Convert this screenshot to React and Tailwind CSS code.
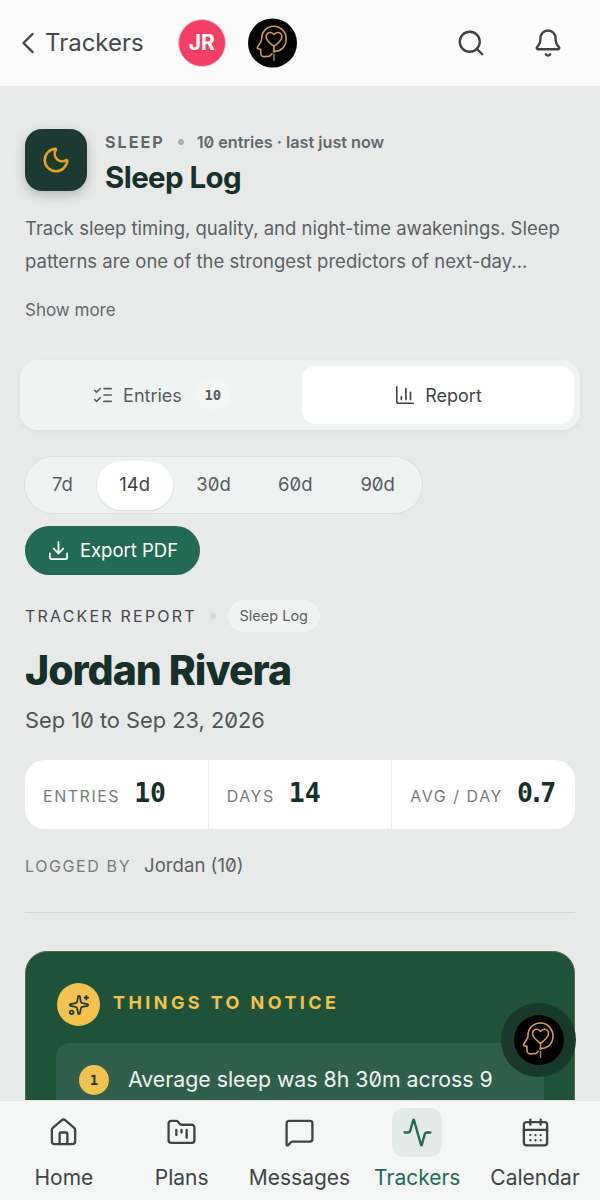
import React from 'react'
import {
  ChevronLeft,
  Search,
  Bell,
  Moon,
  ListChecks,
  ChartColumn,
  Download,
  Sparkles,
  House,
  FolderKanban,
  MessageSquare,
  Activity,
  CalendarDays,
} from 'lucide-react'

const sans = { fontFamily: 'Inter, "Noto Sans", sans-serif' }
const mono = { fontFamily: '"DejaVu Sans Mono", monospace' }

function BrainLogo({ className = '' }) {
  return (
    <svg viewBox="0 0 50 50" className={className}>
      <circle cx="25" cy="25" r="25" fill="#000" />
      <g fill="none" stroke="#d3955c" strokeWidth="1.6" strokeLinecap="round" strokeLinejoin="round">
        <path d="M26 33.5c7 .6 13-4.6 13-12.2C39 13.8 33.500 8 26.500 8 19 8 14 13.500 14 20.500c0 1.500-.6 2.700-1.400 4l-3 5c-.4.8 0 1.400 1 1.500l2.400.3v4.200c0 2.300 1.800 3.600 4 3.400l5-.5 2.500-2.300" />
        <path d="M26.500 28.500c-4-3-8-6-8-10 0-2.500 2-4.300 4.300-4.300 1.600 0 2.800.8 3.700 2.200.9-1.400 2.100-2.200 3.700-2.200 2.300 0 4.300 1.800 4.300 4.300 0 4-4 7-8 10z" />
        <path d="M26.500 28.500v6" />
      </g>
      <path d="M26.500 36v7" stroke="#8a9a86" strokeWidth="1.4" fill="none" />
    </svg>
  )
}

function NavItem({ icon: Icon, label, active }) {
  return (
    <div className="flex flex-1 flex-col items-center">
      <div className={`flex h-[49px] w-[50px] items-center justify-center rounded-xl ${active ? 'bg-[#e3eae8] text-[#236a54]' : 'text-[#3f4445]'}`}>
        <Icon size={31} strokeWidth={1.8} />
      </div>
      <span className={`mt-[7px] whitespace-nowrap text-[21px] leading-[28px] ${active ? 'text-[#236a54]' : 'text-[#3f4445]'}`}>
        {label}
      </span>
    </div>
  )
}

function Stat({ label, value, border, tight }) {
  return (
    <div className={`flex flex-1 items-center gap-[14px] pl-[18px] ${border ? 'border-l border-[#eceeee]' : ''}`}>
      <span className="mt-[3px] text-[16px] tracking-[0.095em] text-[#767b7c]">{label}</span>
      <span className={`mb-[3px] text-[26.500px] font-bold text-[#16302a] ${tight ? 'tracking-[-0.16em]' : ''}`} style={mono}>
        {value}
      </span>
    </div>
  )
}

export default function App() {
  return (
    <div className="relative h-[1200px] w-[600px] overflow-hidden bg-[#e8eaea] slashed-zero" style={sans}>
      <header className="flex h-[86px] items-center bg-[#fbfbfb] pl-[10px] pr-[37px]">
        <ChevronLeft size={36} strokeWidth={1.600} className="text-[#3f4445]" />
        <span className="-ml-px text-[24px] text-[#454a4b]">Trackers</span>
        <div className="ml-[34px] flex h-[48px] w-[48px] items-center justify-center rounded-full border border-[#f3c5d0] bg-[#f33f65] text-[21px] font-bold text-white">
          JR
        </div>
        <BrainLogo className="ml-[22px] h-[50px] w-[49px]" />
        <Search size={30} strokeWidth={1.900} className="ml-auto text-[#3f4445]" />
        <Bell size={30} strokeWidth={1.900} className="ml-[47px] text-[#3f4445]" />
      </header>

      <main className="px-[25px]">
        <section className="flex gap-[18px] pt-[43px]">
          <div className="flex h-[62px] w-[62px] shrink-0 items-center justify-center rounded-[17px] bg-[#1b3a31] shadow-[0_4px_12px_rgba(0,0,0,0.22)]">
            <Moon size={30} strokeWidth={2} className="text-[#e8a317]" />
          </div>
          <div className="mt-[1px]">
            <div className="flex items-center text-[16.200px] font-semibold text-[#63686a]">
              <span className="font-bold tracking-[0.12em]">SLEEP</span>
              <span className="mx-[13px] h-[6px] w-[6px] rounded-full bg-[#a9aeae]" />
              <span>10 entries · last just now</span>
            </div>
            <h1 className="mt-[3px] text-[29.500px] font-bold leading-[40px] tracking-[-0.02em] text-[#16302a]">Sleep Log</h1>
          </div>
        </section>

        <p className="mt-[15px] text-[18.500px] leading-[33px] text-[#5b6062]">
          Track sleep timing, quality, and night-time awakenings. Sleep patterns are one of the strongest predictors of next-day...
        </p>
        <p className="mt-[19px] text-[17px] leading-[26px] text-[#63686a]">Show more</p>

        <div className="-mx-[5px] mt-[37px] flex h-[70px] gap-[6px] rounded-[18px] bg-[#eff3f2] p-[6px] shadow-[0_2px_6px_rgba(0,0,0,0.05)]">
          <div className="flex flex-1 items-center justify-center text-[#575c5e]">
            <ListChecks size={22} strokeWidth={1.800} />
            <span className="ml-[9px] text-[18px]">Entries</span>
            <span className="ml-[14px] flex h-[30px] w-[34px] items-center justify-center rounded-full bg-[#f3f6f5] text-[14px] font-bold" style={mono}>
              10
            </span>
          </div>
          <div className="flex w-[272px] items-center justify-center rounded-[14px] bg-white text-[#3f4445]">
            <ChartColumn size={22} strokeWidth={1.800} />
            <span className="ml-[9px] text-[18px]">Report</span>
          </div>
        </div>

        <div className="-ml-px mt-[26px] flex h-[58px] w-[399px] items-center rounded-full border border-[#dcdfdf] bg-[#eef2f1] px-[3px] text-[18.500px] text-[#575c5e]">
          <span className="w-[69px] text-center">7d</span>
          <span className="flex h-[49px] w-[76px] items-center justify-center rounded-full bg-white text-[#3f4445] shadow-[0_1px_2px_rgba(0,0,0,0.12)]">14d</span>
          <span className="w-[82px] text-center">30d</span>
          <span className="w-[82px] text-center">60d</span>
          <span className="w-[83px] text-center">90d</span>
        </div>

        <div className="mt-[12px] flex h-[49px] w-[175px] items-center justify-center rounded-full bg-[#236a54] text-white">
          <Download size={23} strokeWidth={1.900} />
          <span className="ml-[10px] text-[18.500px]">Export PDF</span>
        </div>

        <div className="mt-[25px] flex items-center">
          <span className="text-[16px] tracking-[0.1375em] text-[#45494a]">TRACKER REPORT</span>
          <span className="ml-[13px] h-[6px] w-[6px] rounded-full bg-[#cfdcdf]" />
          <span className="ml-[12px] flex h-[32px] w-[92px] items-center justify-center rounded-full bg-[#f0f3f2] text-[14.500px] text-[#5b6062]">
            Sleep Log
          </span>
        </div>

        <h2 className="mt-[11px] text-[41px] font-extrabold leading-[54px] tracking-[-0.025em] text-[#16302a]">Jordan Rivera</h2>
        <p className="mt-[8px] text-[21.800px] leading-[30px] text-[#4f5455]">Sep 10 to Sep 23, 2026</p>

        <div className="mt-[25px] flex h-[69px] rounded-[20px] bg-white">
          <Stat label="ENTRIES" value="10" />
          <Stat label="DAYS" value="14" border />
          <Stat label="AVG / DAY" value="0.7" border tight />
        </div>

        <div className="mt-[23px] flex items-center">
          <span className="text-[16px] tracking-[0.1em] text-[#767b7c]">LOGGED BY</span>
          <span className="ml-[13px] text-[18.600px] text-[#5b6062]">Jordan (10)</span>
        </div>

        <div className="mt-[32px] h-px bg-[#d4d7d7]" />

        <section className="mt-[38px] h-[300px] rounded-[22px] border border-[#4d6a45] bg-[#1f5339] px-[31px] pt-[31px]">
          <div className="flex items-center">
            <div className="flex h-[43px] w-[43px] items-center justify-center rounded-full bg-[#f2c14e] text-[#1b3a31]">
              <Sparkles size={22} strokeWidth={1.900} />
            </div>
            <span className="mb-[5px] ml-[13px] text-[18px] font-bold tracking-[0.19em] text-[#f2c14e]">THINGS TO NOTICE</span>
          </div>
          <div className="-mx-px mt-[17px] h-[120px] rounded-[14px] bg-[#2f5f4c] px-[23px] pt-[22px]">
            <div className="flex">
              <span className="flex h-[30px] w-[30px] shrink-0 items-center justify-center rounded-full bg-[#f2c14e] text-[14px] font-bold text-[#1b3a31]" style={mono}>
                1
              </span>
              <span className="ml-[19px] text-[21.300px] leading-[28px] text-[#eef3f0]">Average sleep was 8h 30m across 9</span>
            </div>
          </div>
        </section>
      </main>

      <div className="absolute left-[501px] top-[1003px] flex h-[74px] w-[75px] items-center justify-center rounded-full bg-[#16392b]">
        <BrainLogo className="h-[50px] w-[50px]" />
      </div>

      <nav className="absolute inset-x-0 bottom-0 flex h-[100px] border-t border-[#e3e5e5] bg-[#f5f7f7] pl-[5px] pr-[6px] pt-[7px]">
        <NavItem icon={House} label="Home" />
        <NavItem icon={FolderKanban} label="Plans" />
        <NavItem icon={MessageSquare} label="Messages" />
        <NavItem icon={Activity} label="Trackers" active />
        <NavItem icon={CalendarDays} label="Calendar" />
      </nav>
    </div>
  )
}
